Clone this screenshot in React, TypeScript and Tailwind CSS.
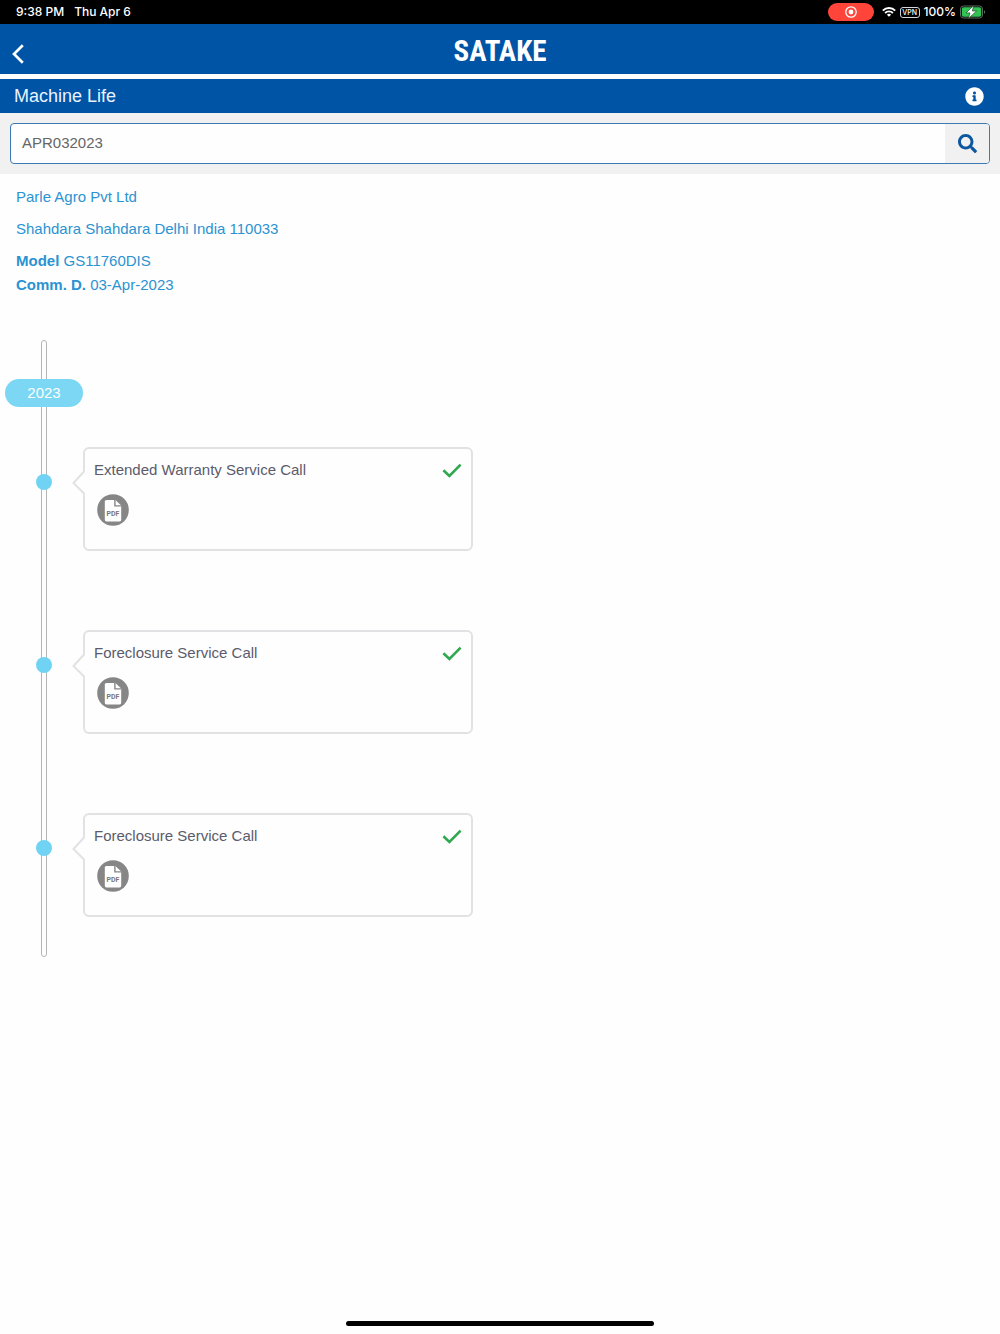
import React from 'react';
import { FaSearch, FaInfoCircle } from 'react-icons/fa';

const events = [
  { id: 1, title: 'Extended Warranty Service Call' },
  { id: 2, title: 'Foreclosure Service Call' },
  { id: 3, title: 'Foreclosure Service Call' },
];

const WifiIcon = () => (
  <svg className="w-[14px] h-[10px]" viewBox="0 0 14 10" fill="none" stroke="#fff" strokeWidth="1.9">
    <path d="M0.8 3.6a8.8 8.8 0 0 1 12.4 0" />
    <path d="M3.1 6a5.6 5.6 0 0 1 7.8 0" />
    <path d="M7 9.8 4.9 7.7a3 3 0 0 1 4.2 0z" fill="#fff" stroke="none" />
  </svg>
);

const BatteryIcon = () => (
  <svg className="w-[26px] h-[14px]" viewBox="0 0 26 14">
    <rect x="0.5" y="1" width="22" height="12" rx="3" fill="none" stroke="#5d6b61" />
    <rect x="1.8" y="2.3" width="19.4" height="9.4" rx="1.8" fill="#30c552" />
    <path d="M24 5.2v3.6c.8-.3 1.2-1 1.2-1.8s-.4-1.5-1.2-1.8z" fill="#5d6b61" />
    <path d="M13.6 0.6 6 7.9h4L8.4 13.4l8.2-7.4h-4.2z" fill="#fff" stroke="#12351d" strokeWidth="0.6" />
  </svg>
);

const CheckIcon = () => (
  <svg className="w-5 h-4" viewBox="0 0 20 16" fill="none" stroke="#2fa84f" strokeWidth="2.6">
    <path d="M1.4 8.2 7.4 14 18.6 2.6" />
  </svg>
);

const PdfIcon = () => (
  <svg className="w-8 h-8" viewBox="0 0 32 32">
    <circle cx="16" cy="16" r="15.8" fill="#868686" />
    <path d="M9.4 6h9l5.8 5.6v14.2a1.6 1.6 0 0 1-1.6 1.6H9.4a1.6 1.6 0 0 1-1.6-1.6V7.6A1.6 1.6 0 0 1 9.4 6z" fill="#fff" />
    <path d="M17.2 6v6.6h7v-1.4h-5.6V6z" fill="#868686" />
    <text x="16" y="21.6" textAnchor="middle" fontSize="7" fontWeight="700" fill="#777" fontFamily="Roboto, sans-serif">PDF</text>
  </svg>
);

const StatusBar = () => (
  <div className="flex h-6 items-center justify-between bg-black pl-4 pr-[14px] font-['Inter',sans-serif] text-xs font-medium text-white">
    <div className="flex gap-[10px]">
      <span>9:38 PM</span>
      <span>Thu Apr 6</span>
    </div>
    <div className="flex items-center gap-1">
      <span className="mr-1 flex h-[18px] w-[46px] items-center justify-center rounded-full bg-[#ff453a]">
        <svg className="h-3 w-3" viewBox="0 0 12 12">
          <circle cx="6" cy="6" r="5.2" fill="none" stroke="#fff" strokeWidth="1.3" />
          <circle cx="6" cy="6" r="2.4" fill="#fff" />
        </svg>
      </span>
      <WifiIcon />
      <span className="flex h-[11px] w-5 items-center justify-center rounded-[3px] border border-gray-300 text-[7px] leading-none">VPN</span>
      <span>100%</span>
      <BatteryIcon />
    </div>
  </div>
);

const TimelineCard = ({ title }: { title: string }) => (
  <li className="relative flex h-[104px] items-start pl-[83px]">
    {/* dot on the rail */}
    <span className="absolute left-9 top-[27px] h-4 w-4 rounded-full bg-[#70d3f4]" />
    <article className="relative h-full w-[390px] rounded-md border-2 border-[#e2e2e4] bg-[#fefefe] px-[9px] pt-[11px]">
      <svg className="absolute -left-[13px] top-5 h-7 w-[13px]" viewBox="0 0 13 28">
        <path d="M13 1 2 14l11 13" fill="#fefefe" />
        <path d="M12 1.5v1L1.5 14 12 24.5v2" fill="none" stroke="#e2e2e4" strokeWidth="2" />
      </svg>
      <div className="flex items-center justify-between">
        <h2 className="leading-5 text-[#5b5b6b]">{title}</h2>
        <CheckIcon />
      </div>
      <button type="button" aria-label="Open PDF" className="ml-[3px] mt-[14px] block">
        <PdfIcon />
      </button>
    </article>
  </li>
);

const App = () => {
  return (
    <div className="flex min-h-screen flex-col bg-[#fefefe] font-['Liberation_Sans',Arial,sans-serif] text-[15px]">
      <StatusBar />

      <header className="relative flex h-[50px] items-center justify-center bg-[#0054a6]">
        <button type="button" aria-label="Back" className="absolute left-3 top-5">
          <svg className="h-5 w-3" viewBox="0 0 12 20" fill="none" stroke="#fff" strokeWidth="2.7">
            <path d="M10.8 1.2 2 10l8.8 8.8" />
          </svg>
        </button>
        <h1 className="pt-1 font-['Roboto_Condensed','Roboto',sans-serif] text-[29px] font-bold leading-8 text-white">SATAKE</h1>
      </header>

      <div className="mt-[5px] flex h-[34px] items-center justify-between bg-[#0054a6] pl-[14px] pr-4 text-white">
        <span className="text-lg text-[#e8f3ff]">Machine Life</span>
        <button type="button" aria-label="Information">
          <FaInfoCircle className="h-[19px] w-[19px]" />
        </button>
      </div>

      <form className="bg-[#f1f1f2] p-[10px]" onSubmit={(e) => e.preventDefault()}>
        <div className="flex h-[41px] overflow-hidden rounded border border-[#3a7ab5] bg-[#fefefe]">
          <input
            type="text"
            aria-label="Machine serial number"
            defaultValue="APR032023"
            className="min-w-0 flex-1 pl-[11px] text-[#666] outline-none"
          />
          <button type="submit" aria-label="Search" className="flex w-11 items-center justify-center bg-[#f1f1f2] text-[#0c57a0]">
            <FaSearch className="h-[19px] w-[19px]" />
          </button>
        </div>
      </form>

      <section className="px-4 pt-[11px] text-[#2b93d1]">
        <p className="mb-2 leading-6">Parle Agro Pvt Ltd</p>
        <p className="mb-2 leading-6">Shahdara Shahdara Delhi India 110033</p>
        <p className="leading-6"><b>Model</b> GS11760DIS</p>
        <p className="leading-6"><b>Comm. D.</b> 03-Apr-2023</p>
      </section>

      <main className="relative mt-[43px] pb-10 pt-[39px]">
        {/* vertical rail */}
        <div className="absolute bottom-0 left-[41px] top-0 w-[6px] rounded-full border border-[#b5b5b5] bg-[#fefefe]" />
        <div className="relative ml-[5px] flex h-7 w-[78px] items-center justify-center rounded-full bg-[#7bd7f3] text-white">2023</div>
        <ol className="mt-10 flex flex-col gap-[79px]">
          {events.map((event) => (
            <TimelineCard key={event.id} title={event.title} />
          ))}
        </ol>
      </main>

      <div className="mx-auto mb-2 mt-auto h-[5px] w-[308px] rounded-full bg-black" />
    </div>
  );
};

export default App;
